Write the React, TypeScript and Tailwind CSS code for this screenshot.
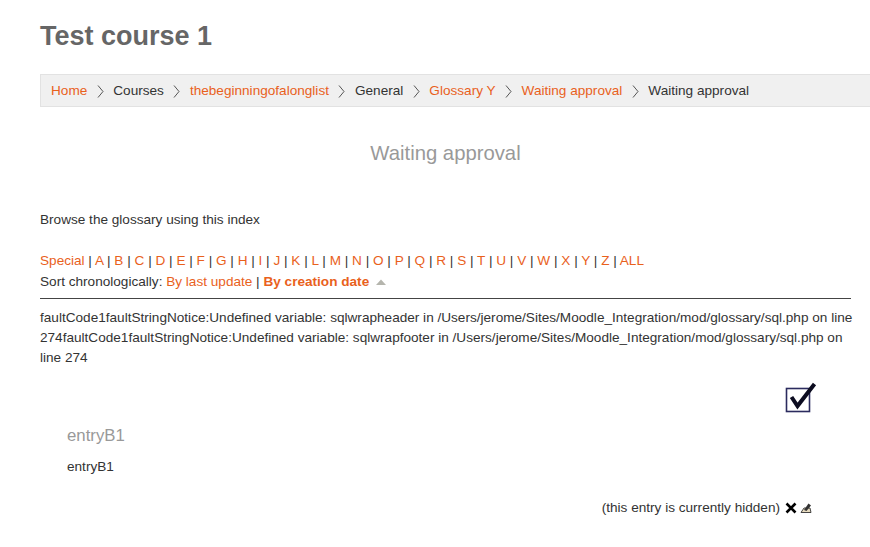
const letters = "A B C D E F G H I J K L M N O P Q R S T U V W X Y Z".split(" ");

function Sep() {
  return (
    <svg width="7" height="13" viewBox="0 0 7 13" className="mx-[9.5px] inline-block shrink-0 align-[-1px]">
      <path d="M1 0.5 L6 6.5 L1 12.5" fill="none" stroke="#444" strokeWidth="0.9" />
    </svg>
  );
}

function A({ children }: { children: React.ReactNode }) {
  return <a className="text-[#e9611c]">{children}</a>;
}

export default function App() {
  return (
    <div className="h-[547px] w-[870px] overflow-hidden bg-white pl-10 pr-[19px] font-['Liberation_Sans',Arial,sans-serif] text-[13.6px] text-[#333]">
      <h1 className="pt-[19px] text-[27px] leading-[34px] font-bold text-[#666]">Test course 1</h1>

      {/* Breadcrumb */}
      <div className="mt-[21px] -mr-6 flex h-[33px] items-center whitespace-nowrap border border-[#e2e2e2] bg-[#f0f0f0] pl-[10px] pt-px">
        <A>Home</A><Sep />
        <span>Courses</span><Sep />
        <A>thebeginningofalonglist</A><Sep />
        <span>General</span><Sep />
        <A>Glossary Y</A><Sep />
        <A>Waiting approval</A><Sep />
        <span>Waiting approval</span>
      </div>

      <h2 className="mt-[34px] text-center text-[20.3px] leading-6 text-[#999]">Waiting approval</h2>

      <p className="mt-[46px] leading-[18px]">Browse the glossary using this index</p>

      <div className="mt-[23px] leading-[18px] whitespace-nowrap">
        <A>Special</A>
        {letters.map((l) => (
          <span key={l}> | <A>{l}</A></span>
        ))}
        {" | "}<A>ALL</A>
      </div>
      <div className="mt-[3px] flex items-center leading-[18px]">
        <span className="whitespace-pre">Sort chronologically: </span>
        <A>By last update</A>
        <span className="whitespace-pre"> | </span>
        <a className="font-bold text-[#e9611c]">By creation date</a>
        <svg width="10" height="6" viewBox="0 0 10 6" className="ml-[7px]">
          <path d="M0 6 L5 0.5 L10 6 Z" fill="#b5b5ad" />
        </svg>
      </div>

      <hr className="mt-[7px] border-t border-[#444]" />

      <p className="mt-[9px] leading-5 whitespace-nowrap">
        faultCode1faultStringNotice:Undefined variable: sqlwrapheader in /Users/jerome/Sites/Moodle_Integration/mod/glossary/sql.php on line
        <br />
        274faultCode1faultStringNotice:Undefined variable: sqlwrapfooter in /Users/jerome/Sites/Moodle_Integration/mod/glossary/sql.php on
        <br />
        line 274
      </p>

      <div className="flex justify-end pr-8 pt-[13px]">
        <svg width="34" height="32" viewBox="0 0 34 32">
          <rect x="1.5" y="7.5" width="23" height="23" fill="#fff" stroke="#2b2b5e" strokeWidth="1.6" />
          <path d="M6.5 16 L12.5 25 L29.5 3" fill="none" stroke="#0c0c20" strokeWidth="4" />
        </svg>
      </div>

      <div className="pl-[27px]">
        <h3 className="mt-[13px] text-[16.8px] leading-5 text-[#999]">entryB1</h3>
        <p className="mt-[12px] leading-[18px]">entryB1</p>
      </div>

      <div className="mt-[23px] flex items-center justify-end pr-[39px]">
        <span className="leading-[18px]">(this entry is currently hidden)</span>
        <svg width="12" height="12" viewBox="0 0 12 12" className="ml-[5px]">
          <path d="M1.5 1.5 L10.5 10.5 M10.5 1.5 L1.5 10.5" stroke="#000" strokeWidth="2.6" />
        </svg>
        <svg width="12" height="12" viewBox="0 0 12 12" className="ml-[3px]">
          <path d="M1 10.5 L11 10.5 L10 6 L4 6 Z" fill="#e8dcc0" stroke="#333" strokeWidth="0.9" />
          <path d="M4 8 L8.5 1.5 L11 3.5 L6.5 9 Z" fill="#333" />
        </svg>
      </div>
    </div>
  );
}
